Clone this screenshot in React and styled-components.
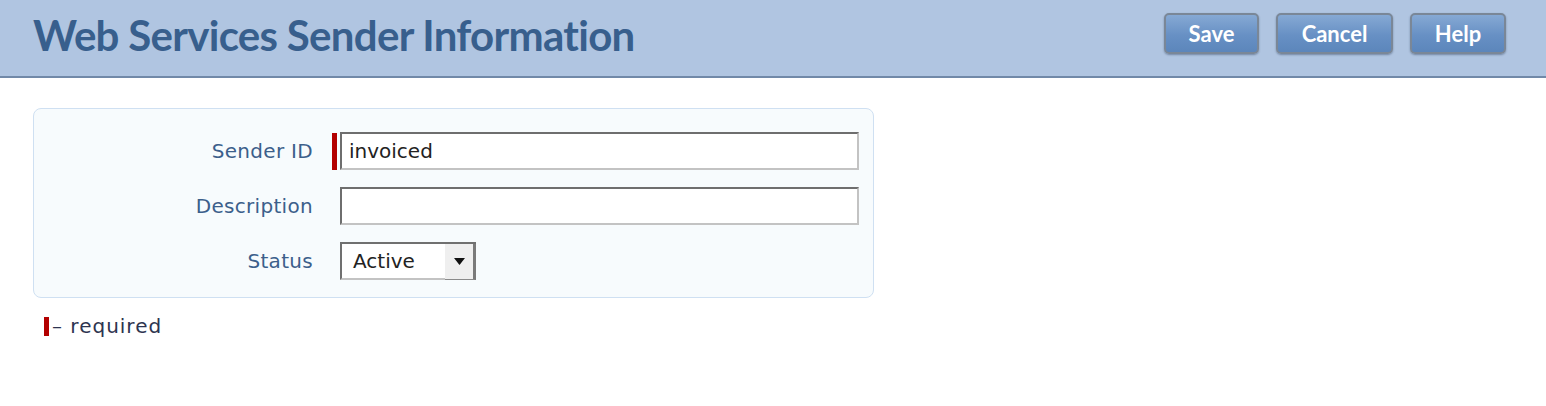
import styled, { createGlobalStyle } from "styled-components";

const GlobalStyle = createGlobalStyle`
  body {
    margin: 0;
    background: #ffffff;
    font-family: "DejaVu Sans", sans-serif;
  }
`;

function App() {
  return (
    <>
      <GlobalStyle />
      <HeaderBar>
        <Title>Web Services Sender Information</Title>
        <ButtonGroup>
          <HeaderButton $width={95}>Save</HeaderButton>
          <HeaderButton $width={117}>Cancel</HeaderButton>
          <HeaderButton $width={96}>Help</HeaderButton>
        </ButtonGroup>
      </HeaderBar>
      <Content>
        <FormPanel>
          <Label>Sender ID</Label>
          <MarkerCell>
            <RequiredMark />
          </MarkerCell>
          <TextInput defaultValue="invoiced" />

          <Label>Description</Label>
          <MarkerCell />
          <TextInput defaultValue="" />

          <Label>Status</Label>
          <MarkerCell />
          <SelectBox>
            <SelectValue>Active</SelectValue>
            <SelectArrow>
              <svg width="11" height="7" viewBox="0 0 11 7">
                <path d="M0 0 H11 L5.5 7 Z" fill="#111" />
              </svg>
            </SelectArrow>
          </SelectBox>
        </FormPanel>
        <Legend>
          <RequiredMark $height={19} />
          <LegendText>– required</LegendText>
        </Legend>
      </Content>
    </>
  );
}

export default App;

const HeaderBar = styled.header`
  display: flex;
  justify-content: space-between;
  align-items: flex-start;
  height: 76px;
  background-color: #b0c5e1;
  border-bottom: 2px solid #7189a8;
  padding: 0 40px 0 33px;
`;

const Title = styled.h1`
  margin: 0;
  padding-top: 10px;
  font-family: "Lato", sans-serif;
  font-weight: 700;
  font-size: 42px;
  letter-spacing: -0.7px;
  color: #385f8d;
`;

const ButtonGroup = styled.div`
  display: flex;
  gap: 17px;
  padding-top: 13px;
`;

const HeaderButton = styled.button`
  width: ${(p) => p.$width}px;
  height: 41px;
  border: 2px solid #7a8797;
  border-radius: 5px;
  background: linear-gradient(#86a9d4, #6790c4 55%, #5c86bb);
  box-shadow: 0 1px 2px rgba(40, 60, 90, 0.45);
  color: #ffffff;
  font-family: "Lato", sans-serif;
  font-weight: 700;
  font-size: 22px;
  cursor: pointer;
`;

const Content = styled.main`
  padding: 30px 0 0 33px;
`;

const FormPanel = styled.section`
  display: grid;
  grid-template-columns: 279px 27px 519px;
  row-gap: 17px;
  align-items: center;
  width: 841px;
  box-sizing: border-box;
  padding: 23px 0 17px 0;
  border: 1px solid #cfe0f2;
  border-radius: 8px;
  background-color: #f7fbfd;
`;

const Label = styled.label`
  text-align: right;
  font-size: 20px;
  letter-spacing: 0.3px;
  color: #3c5f8b;
`;

const MarkerCell = styled.div`
  display: flex;
  justify-content: flex-end;
  padding-right: 3px;
`;

const RequiredMark = styled.span`
  display: inline-block;
  width: 5px;
  height: ${(p) => p.$height || 37}px;
  background-color: #b30000;
`;

const TextInput = styled.input`
  box-sizing: border-box;
  width: 519px;
  height: 38px;
  padding: 0 7px;
  border-style: solid;
  border-width: 2px;
  border-color: #6e6e6e #c3c3c3 #c3c3c3 #6e6e6e;
  background: #ffffff;
  font-family: "DejaVu Sans", sans-serif;
  font-size: 20px;
  color: #222;
  outline: none;
`;

const SelectBox = styled.div`
  display: flex;
  box-sizing: border-box;
  width: 136px;
  height: 38px;
  border-style: solid;
  border-width: 2px 0 2px 2px;
  border-color: #707070 transparent #c3c3c3 #707070;
  background: #ffffff;
`;

const SelectValue = styled.span`
  flex: 1;
  display: flex;
  align-items: center;
  padding-left: 11px;
  font-size: 20px;
  color: #222;
`;

const SelectArrow = styled.span`
  display: flex;
  align-items: center;
  justify-content: center;
  width: 28px;
  background: #efefef;
  border-right: 3px solid #7a7a7a;
  border-bottom: 1px solid #8a8a8a;
  margin-bottom: -2px;
`;

const Legend = styled.div`
  display: flex;
  align-items: center;
  gap: 3px;
  margin-top: 16px;
  padding-left: 11px;
`;

const LegendText = styled.span`
  font-size: 20px;
  letter-spacing: 1px;
  color: #2d3450;
`;
